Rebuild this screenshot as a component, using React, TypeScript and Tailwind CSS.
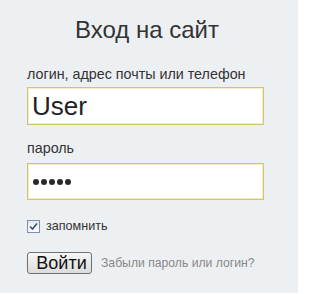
import React from "react";

export default function App() {
  return (
    <div className="w-[319px] h-[294px] bg-white" style={{ fontFamily: '"Liberation Sans", Arial, sans-serif' }}>
      <div className="w-[298px] h-[293px] bg-[#edf0f3] px-[27px] pt-[16px]">
        <h1 className="text-center text-[24px] leading-[28px] text-[#333] pr-[4px]">Вход на сайт</h1>
        <div className="mt-[22px] text-[14.3px] leading-[16px] text-[#333]">логин, адрес почты или телефон</div>
        <div className="mt-[5px] w-[237px] h-[38px] border border-[#d3c46f] bg-white shadow-[inset_0_0_0_1px_#f3edc6] flex items-center pl-[4px]">
          <span className="text-[26px] leading-[30px] text-[#222]">User</span>
        </div>
        <div className="mt-[15px] text-[14.3px] leading-[16px] text-[#333]">пароль</div>
        <div className="mt-[7px] w-[237px] h-[37px] border border-[#d3c46f] bg-white shadow-[inset_0_0_0_1px_#f3edc6] flex items-center gap-[2px] pl-[5px]">
          <span className="w-[6px] h-[6px] rounded-full bg-[#2a2a2a]" />
          <span className="w-[6px] h-[6px] rounded-full bg-[#2a2a2a]" />
          <span className="w-[6px] h-[6px] rounded-full bg-[#2a2a2a]" />
          <span className="w-[6px] h-[6px] rounded-full bg-[#2a2a2a]" />
          <span className="w-[6px] h-[6px] rounded-full bg-[#2a2a2a]" />
        </div>
        <div className="mt-[18px] flex items-center gap-[6px]">
          <span className="w-[13px] h-[13px] border border-[#7b8fa8] bg-gradient-to-b from-[#e4e8ee] to-[#ffffff] flex items-center justify-center">
            <svg width="9" height="9" viewBox="0 0 9 9">
              <path d="M1 4.5 L3.5 7 L8 1.5" fill="none" stroke="#3b4f7a" strokeWidth="1.6" />
            </svg>
          </span>
          <span className="text-[12.6px] leading-[16px] text-[#333]">запомнить</span>
        </div>
        <div className="mt-[18px] flex items-center gap-[9px]">
          <button className="w-[65px] h-[22px] border border-[#707070] rounded-[3px] bg-gradient-to-b from-[#f6f6f6] to-[#dcdcdc] text-[18px] leading-[20px] text-[#111] pl-[4px]">Войти</button>
          <span className="text-[12.2px] text-[#888]">Забыли пароль или логин?</span>
        </div>
      </div>
    </div>
  );
}
